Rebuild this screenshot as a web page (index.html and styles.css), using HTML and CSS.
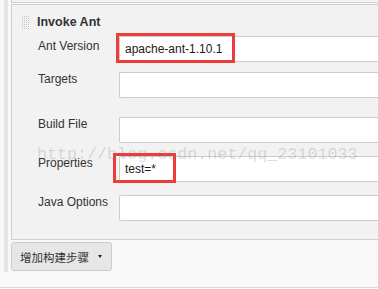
FILE: index.html
```html
<!DOCTYPE html>
<html lang="zh-CN">
<head>
    <meta charset="UTF-8">
    <title>Invoke Ant</title>
    <link rel="stylesheet" href="styles.css">
</head>
<body>
    <div class="page">
        <div class="rail"></div>
        <div class="steps">
            <div class="prev-step"></div>

            <!-- Étape de build : Invoke Ant -->
            <div class="step">
                <div class="step-header">
                    <span class="handle"></span>
                    <span class="step-title">Invoke Ant</span>
                </div>
                <div class="row row-first">
                    <label class="row-label label-ant">Ant Version</label>
                    <input type="text" class="field" value="apache-ant-1.10.1">
                </div>
                <div class="row row-targets">
                    <label class="row-label">Targets</label>
                    <input type="text" class="field">
                </div>
                <div class="row row-build">
                    <label class="row-label">Build File</label>
                    <input type="text" class="field">
                </div>
                <div class="row">
                    <label class="row-label">Properties</label>
                    <input type="text" class="field" value="test=*">
                </div>
                <div class="row">
                    <label class="row-label">Java Options</label>
                    <input type="text" class="field">
                </div>
            </div>

            <button class="add-step">增加构建步骤 <span class="caret"></span></button>
        </div>

        <!-- annotations par-dessus la capture -->
        <div class="mark mark-ant"></div>
        <div class="mark mark-props"></div>
        <div class="watermark">http://blog.csdn.net/qq_23101033</div>
    </div>
</body>
</html>
```

FILE: styles.css
```css
body {
    margin: 0;
    background: #fff;
    font-family: "Liberation Sans", Arial, "Noto Sans CJK SC", sans-serif;
    font-size: 12px;
    color: #333;
    overflow: hidden;
}
.page {
    position: relative;
    display: flex;
    align-items: flex-start;
    height: 287px;
    padding-left: 4px;
    background: #f8f8f8;
    border-bottom: 1px solid #dcdcdc;
}
.rail {
    width: 4px;
    height: 272px;
    background: #e4e4e4;
}
.steps {
    flex: 1;
    min-width: 0;
    margin-left: 3px;
}
.prev-step {
    height: 2px;
    background: #f2f2f2;
    border-left: 1px solid #cfcfcf;
    border-bottom: 1px solid #cfcfcf;
    margin-bottom: 1px;
}
.step {
    background: #f2f2f2;
    border: 1px solid #cfcfcf;
    border-right: none;
    padding: 10px 0 18px 0;
}
.step-header {
    display: flex;
    align-items: center;
    height: 14px;
    padding-left: 9px;
}
.handle {
    width: 9px;
    height: 14px;
    margin-right: 7px;
    background-image: linear-gradient(90deg, #f2f2f2 1px, transparent 1px),
                      linear-gradient(#f2f2f2 1px, #c4c4c4 1px);
    background-size: 2px 2px;
}
.step-title {
    font-weight: bold;
    font-size: 12.5px;
}
.row {
    display: flex;
    align-items: flex-start;
    margin-top: 13px;
    padding-left: 26px;
}
.row-first {
    margin-top: 7px;
}
.row-targets {
    margin-top: 10px;
}
.row-build {
    margin-top: 19px;
}
.row-label {
    width: 81px;
    flex-shrink: 0;
    line-height: 14px;
}
.label-ant {
    margin-top: 3px;
}
.field {
    flex: 1;
    min-width: 0;
    height: 26px;
    box-sizing: border-box;
    margin: 0;
    padding: 0 5px;
    border: 1px solid #cccccc;
    border-right: none;
    border-radius: 2px 0 0 2px;
    background: #fff;
    font-family: "Liberation Sans", Arial, sans-serif;
    font-size: 12px;
    color: #1a1a1a;
    outline: none;
}
.add-step {
    display: flex;
    align-items: center;
    margin-top: 2px;
    width: 101px;
    height: 29px;
    padding: 0 0 0 8px;
    background: #e6e6e6;
    border: 1px solid #cccccc;
    border-radius: 3px;
    font-family: "Noto Sans CJK SC", sans-serif;
    font-size: 11.5px;
    color: #333;
}
.caret {
    width: 0;
    height: 0;
    margin-left: 9px;
    border-left: 2.5px solid transparent;
    border-right: 2.5px solid transparent;
    border-top: 3px solid #222;
}
.mark {
    position: absolute;
    box-sizing: border-box;
    border: 3px solid #ee3b3b;
}
.mark-ant {
    left: 116px;
    top: 33px;
    width: 119px;
    height: 30px;
}
.mark-props {
    left: 113px;
    top: 153px;
    width: 63px;
    height: 30px;
}
.watermark {
    position: absolute;
    left: 37px;
    top: 146px;
    font-family: "Liberation Mono", monospace;
    font-size: 16.7px;
    line-height: 17px;
    color: rgba(120, 120, 120, 0.25);
    white-space: nowrap;
    pointer-events: none;
}
```
